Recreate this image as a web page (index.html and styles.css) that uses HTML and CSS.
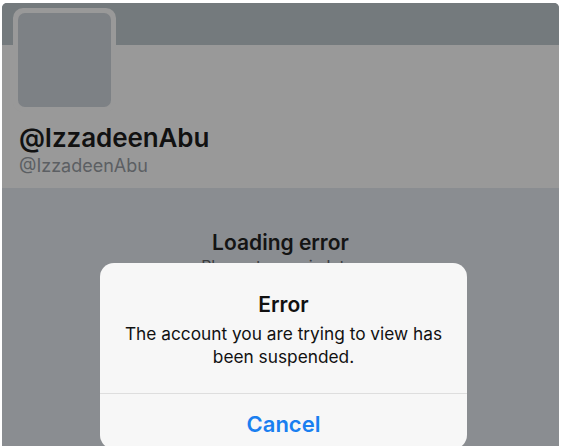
FILE: index.html
```html
<!DOCTYPE html>
<html>
<head>
<meta charset="utf-8">
<link rel="stylesheet" href="styles.css">
</head>
<body>
<div class="screen">
  <div class="banner"></div>
  <div class="profile">
    <div class="avatar"><div class="avatar-inner"></div></div>
    <div class="name">@IzzadeenAbu</div>
    <div class="handle">@IzzadeenAbu</div>
  </div>
  <div class="content">
    <div class="load-title">Loading error</div>
    <div class="load-sub">Please try again later</div>
  </div>
  <div class="dialog">
    <div class="dialog-body">
      <div class="dialog-title">Error</div>
      <div class="dialog-msg">The account you are trying to view has been suspended.</div>
    </div>
    <div class="dialog-btn">Cancel</div>
  </div>
</div>
</body>
</html>
```

FILE: styles.css
```css
html, body {
  margin: 0;
  padding: 0;
  background: #ffffff;
  width: 561px;
  height: 446px;
  overflow: hidden;
  font-family: "Inter", "Liberation Sans", sans-serif;
}
.screen {
  position: relative;
  margin: 3px 2px 0 2px;
  height: 443px;
  background: #8a8d91;
  border-radius: 5px 5px 0 0;
  overflow: hidden;
}
.banner {
  height: 42px;
  background: #747a7d;
}
.profile {
  display: flex;
  flex-direction: column;
  height: 143px;
  background: #999999;
  padding-left: 11px;
}
.avatar {
  margin-top: -37px;
  width: 93px;
  height: 94px;
  border: 5px solid #999999;
  border-radius: 10px;
  background: #999999;
}
.avatar-inner {
  width: 93px;
  height: 94px;
  border-radius: 7px;
  background: #7d8185;
}
.name {
  margin-top: 10px;
  padding-left: 6px;
  font-size: 26px;
  font-weight: 600;
  color: #111111;
  line-height: 31px;
  letter-spacing: -0.1px;
}
.handle {
  padding-left: 6px;
  margin-top: 2px;
  font-size: 18px;
  color: #5c5f63;
  line-height: 22px;
}
.content {
  text-align: center;
  padding-top: 42px;
}
.load-title {
  font-size: 21px;
  font-weight: 600;
  color: #141414;
  line-height: 26px;
}
.load-sub {
  font-size: 16px;
  color: #3a3c3f;
  line-height: 20px;
}
.dialog {
  position: absolute;
  left: 98px;
  top: 260px;
  width: 367px;
  height: 186px;
  background: #f7f7f7;
  border-radius: 14px;
  text-align: center;
}
.dialog-body {
  padding-top: 29px;
  height: 101px;
  border-bottom: 1px solid #dedede;
}
.dialog-title {
  font-size: 21px;
  font-weight: 600;
  color: #111111;
  line-height: 26px;
}
.dialog-msg {
  margin: 4px auto 0;
  width: 340px;
  font-size: 17.3px;
  color: #111111;
  line-height: 23px;
}
.dialog-btn {
  padding-top: 16px;
  font-size: 22px;
  font-weight: 600;
  color: #1a7ff0;
  line-height: 28px;
}
```
